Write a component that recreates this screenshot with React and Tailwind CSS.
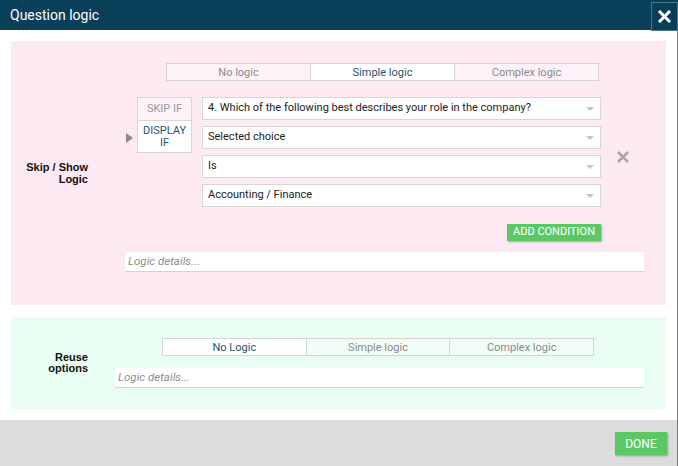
import React from "react";

const TealText = "text-[#1f5270]";

function Tabs({ items, active, bg, width }) {
  return (
    <div className={`flex h-[18px] border border-[#d4d4d4] ${width}`}>
      {items.map((t, i) => (
        <div
          key={t}
          className={`flex flex-1 items-center justify-center text-[11px] leading-none ${
            i > 0 ? "border-l border-[#d4d4d4]" : ""
          } ${i === active ? `bg-white ${TealText}` : `${bg} text-[#8a8a8a]`}`}
        >
          {t}
        </div>
      ))}
    </div>
  );
}

function Select({ value }) {
  return (
    <div className="flex h-[23px] items-center justify-between border border-[#d6d6d6] bg-white pl-[5px] pr-[6px] text-[11px] text-[#222]">
      <span>{value}</span>
      <span className="h-0 w-0 border-x-[4px] border-t-[4px] border-x-transparent border-t-[#c4c4c4]" />
    </div>
  );
}

function LogicDetails({ className }) {
  return (
    <div
      className={`flex h-[20px] items-center border-b border-[#d2d2d2] bg-white pl-[3px] text-[11.5px] italic text-[#8d8d8d] ${className}`}
    >
      Logic details...
    </div>
  );
}

export default function App() {
  return (
    <div className="h-[466px] w-[678px] overflow-hidden bg-white font-['Roboto',sans-serif]">
      <div className="flex h-[30px] items-center justify-between bg-[#0a3f5a] pl-[10px]">
        <span className="text-[14px] text-white">Question logic</span>
        <div className="mb-[-1px] mt-[1px] flex h-[29px] w-[27px] items-center justify-center border border-[#4e7487]">
          <svg width="13" height="13" viewBox="0 0 13 13">
            <path d="M2 2 L11 11 M11 2 L2 11" stroke="white" strokeWidth="3" strokeLinecap="square" />
          </svg>
        </div>
      </div>

      <div className="flex h-[436px] w-[678px] flex-col border-r border-[#7a7a7a]">
        <div className="mx-[11px] mt-[11px] flex h-[264px] items-center bg-[#fde9f1]">
          <div className="w-[77px] text-right font-['Liberation_Sans',sans-serif] text-[11px] font-bold leading-[12px] text-[#111]">
            Skip / Show
            <br />
            Logic
          </div>
          <div className="flex h-full flex-1 flex-col pt-[22px]">
            <div className="ml-[78px]">
              <Tabs items={["No logic", "Simple logic", "Complex logic"]} active={1} bg="bg-[#fdf2f7]" width="w-[433px]" />
            </div>
            <div className="mt-[16px] flex items-start">
              <div className="ml-[38px] mt-[36px] h-0 w-0 border-y-[5px] border-l-[7px] border-y-transparent border-l-[#8a8a8a]" />
              <div className="ml-[4px] flex w-[55px] flex-col border border-[#d6d6d6] text-[11px] leading-[12px]">
                <div className="flex h-[22px] items-center justify-center bg-[#fdf2f7] text-[#9a9a9a]">SKIP IF</div>
                <div className={`flex h-[32px] flex-col items-center justify-center border-t border-[#d6d6d6] bg-white ${TealText}`}>
                  <span>DISPLAY</span>
                  <span>IF</span>
                </div>
              </div>
              <div className="ml-[10px] flex w-[399px] flex-col gap-[6px]">
                <Select value="4. Which of the following best describes your role in the company?" />
                <Select value="Selected choice" />
                <Select value="Is" />
                <Select value="Accounting / Finance" />
              </div>
              <svg className="ml-[15px] mt-[53px]" width="14" height="14" viewBox="0 0 14 14">
                <path d="M2 2 L12 12 M12 2 L2 12" stroke="#a7a7a7" strokeWidth="2.6" />
              </svg>
            </div>
            <div className="mt-[17px] flex w-[513px] justify-end">
              <div className="flex h-[17px] items-center bg-[#5cc865] px-[6px] text-[11px] text-white shadow-[1px_1px_2px_rgba(0,0,0,0.3)]">
                ADD CONDITION
              </div>
            </div>
            <LogicDetails className="ml-[37px] mt-[11px] w-[519px]" />
          </div>
        </div>

        <div className="mx-[11px] mt-[12px] flex h-[92px] items-center bg-[#e9fdf2]">
          <div className="w-[77px] text-right font-['Liberation_Sans',sans-serif] text-[11px] font-bold leading-[11px] text-[#111]">
            Reuse
            <br />
            options
          </div>
          <div className="flex h-full flex-1 flex-col pt-[21px]">
            <div className="ml-[74px]">
              <Tabs items={["No Logic", "Simple logic", "Complex logic"]} active={0} bg="bg-[#f1fdf6]" width="w-[432px]" />
            </div>
            <LogicDetails className="ml-[27px] mt-[12px] w-[529px]" />
          </div>
        </div>

        <div className="mt-[11px] flex flex-1 items-start justify-end bg-[#dcdcdc] pr-[10px] pt-[12px]">
          <div className="flex h-[23px] w-[52px] items-center justify-center bg-[#5cc865] text-[12px] text-white shadow-[1px_1px_2px_rgba(0,0,0,0.3)]">
            DONE
          </div>
        </div>
      </div>
    </div>
  );
}
